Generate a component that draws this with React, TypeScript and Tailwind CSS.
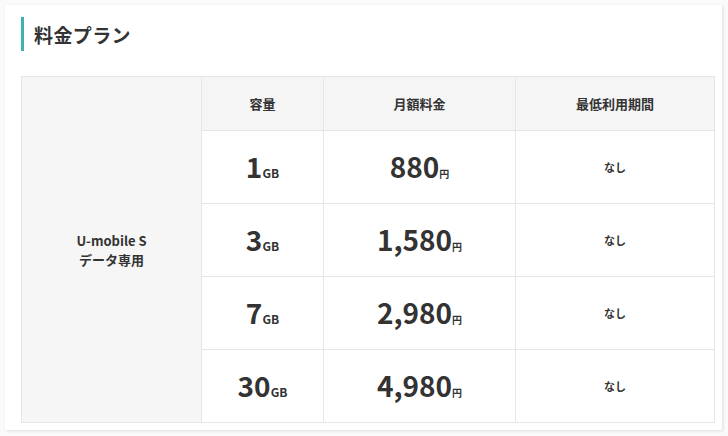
import React from 'react';

const font = { fontFamily: '"Noto Sans CJK JP", "Noto Sans", sans-serif' };

const plans = [
    { gb: '1', price: '880' },
    { gb: '3', price: '1,580' },
    { gb: '7', price: '2,980' },
    { gb: '30', price: '4,980' },
];

const App: React.FC = () => {
    return (
        <div
            className="w-[728px] h-[436px] bg-[#fafafa] pt-[5px] pl-[5px] text-[#333]"
            style={font}
        >
            <div className="w-[717px] h-[425px] bg-white shadow-[1px_1px_3px_rgba(0,0,0,0.12)] pt-[12px] pl-[16px]">
                <div className="flex items-center h-[34px] border-l-[3px] border-[#3fb0b8] pl-[10px]">
                    <h2 className="text-[19px] font-bold leading-none tracking-[0.02em]">
                        料金プラン
                    </h2>
                </div>
                <table className="mt-[25px] w-[693px] border-collapse table-fixed">
                    <colgroup>
                        <col className="w-[180px]" />
                        <col className="w-[122px]" />
                        <col className="w-[192px]" />
                        <col className="w-[199px]" />
                    </colgroup>
                    <tbody>
                        <tr className="h-[54px] bg-[#f5f5f5]">
                            <th
                                rowSpan={5}
                                className="border border-[#e6e6e6] bg-[#f6f6f6] text-[13px] font-bold leading-[19px] align-middle"
                            >
                                U-mobile S
                                <br />
                                データ専用
                            </th>
                            <th className="border border-[#e6e6e6] text-[13px] font-bold">
                                容量
                            </th>
                            <th className="border border-[#e6e6e6] text-[13px] font-bold">
                                月額料金
                            </th>
                            <th className="border border-[#e6e6e6] text-[13px] font-bold">
                                最低利用期間
                            </th>
                        </tr>
                        {plans.map((p) => (
                            <tr key={p.gb} className="h-[73px]">
                                <td className="border border-[#e6e6e6] text-center align-middle">
                                    <span className="text-[28px] font-semibold leading-none">
                                        {p.gb}
                                    </span>
                                    <span className="text-[12px] font-bold leading-none">
                                        GB
                                    </span>
                                </td>
                                <td className="border border-[#e6e6e6] text-center align-middle">
                                    <span className="text-[28px] font-semibold leading-none">
                                        {p.price}
                                    </span>
                                    <span className="text-[10px] font-bold leading-none">
                                        円
                                    </span>
                                </td>
                                <td className="border border-[#e6e6e6] text-center align-middle text-[11px] font-bold">
                                    なし
                                </td>
                            </tr>
                        ))}
                    </tbody>
                </table>
            </div>
        </div>
    );
};

export default App;
